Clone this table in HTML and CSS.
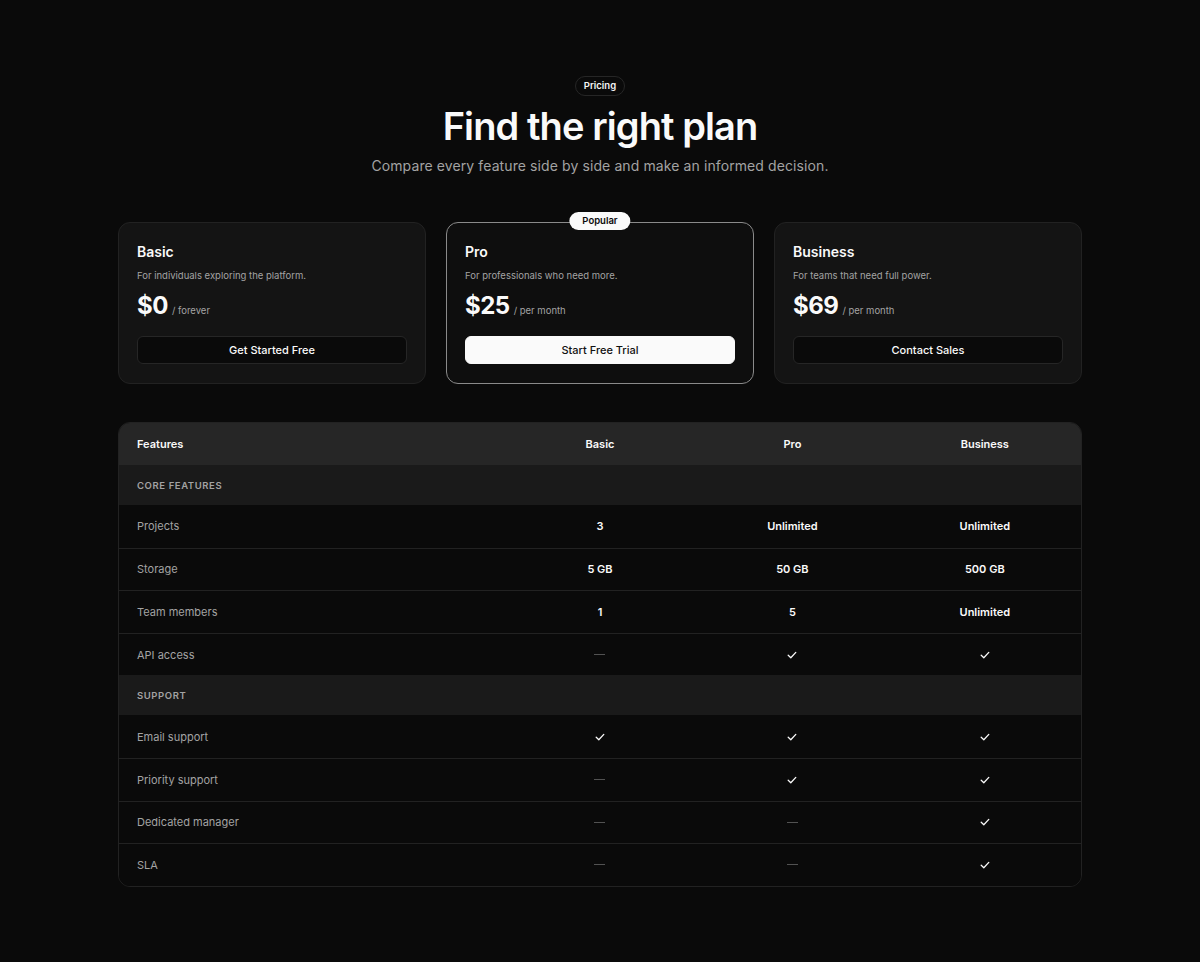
FILE: index.html
```html
<!DOCTYPE html>
<html lang="en">
<head>
<meta charset="utf-8">
<title>Pricing</title>
<link rel="stylesheet" href="styles.css">
</head>
<body>
<main class="page">
  <header class="hero">
    <span class="pill">Pricing</span>
    <h1 class="title">Find the right plan</h1>
    <p class="subtitle">Compare every feature side by side and make an informed decision.</p>
  </header>

  <section class="plans">
    <div class="plan">
      <h2 class="plan-name">Basic</h2>
      <p class="plan-desc">For individuals exploring the platform.</p>
      <div class="plan-price"><span class="amount">$0</span><span class="period">/ forever</span></div>
      <button class="btn">Get Started Free</button>
    </div>
    <div class="plan plan-featured">
      <span class="badge">Popular</span>
      <h2 class="plan-name">Pro</h2>
      <p class="plan-desc">For professionals who need more.</p>
      <div class="plan-price"><span class="amount">$25</span><span class="period">/ per month</span></div>
      <button class="btn btn-primary">Start Free Trial</button>
    </div>
    <div class="plan">
      <h2 class="plan-name">Business</h2>
      <p class="plan-desc">For teams that need full power.</p>
      <div class="plan-price"><span class="amount">$69</span><span class="period">/ per month</span></div>
      <button class="btn">Contact Sales</button>
    </div>
  </section>

  <section class="compare">
    <div class="row row-head">
      <div class="cell label">Features</div>
      <div class="cell">Basic</div>
      <div class="cell">Pro</div>
      <div class="cell">Business</div>
    </div>
    <div class="row row-cat"><div class="cell label">CORE FEATURES</div></div>
    <div class="row">
      <div class="cell label">Projects</div>
      <div class="cell val">3</div>
      <div class="cell val">Unlimited</div>
      <div class="cell val">Unlimited</div>
    </div>
    <div class="row">
      <div class="cell label">Storage</div>
      <div class="cell val">5 GB</div>
      <div class="cell val">50 GB</div>
      <div class="cell val">500 GB</div>
    </div>
    <div class="row">
      <div class="cell label">Team members</div>
      <div class="cell val">1</div>
      <div class="cell val">5</div>
      <div class="cell val">Unlimited</div>
    </div>
    <div class="row">
      <div class="cell label">API access</div>
      <div class="cell"><span class="dash"></span></div>
      <div class="cell"><svg class="check" viewBox="0 0 12 12"><path d="M2.2 6.3 L4.8 8.8 L9.8 3.4"/></svg></div>
      <div class="cell"><svg class="check" viewBox="0 0 12 12"><path d="M2.2 6.3 L4.8 8.8 L9.8 3.4"/></svg></div>
    </div>
    <div class="row row-cat"><div class="cell label">SUPPORT</div></div>
    <div class="row">
      <div class="cell label">Email support</div>
      <div class="cell"><svg class="check" viewBox="0 0 12 12"><path d="M2.2 6.3 L4.8 8.8 L9.8 3.4"/></svg></div>
      <div class="cell"><svg class="check" viewBox="0 0 12 12"><path d="M2.2 6.3 L4.8 8.8 L9.8 3.4"/></svg></div>
      <div class="cell"><svg class="check" viewBox="0 0 12 12"><path d="M2.2 6.3 L4.8 8.8 L9.8 3.4"/></svg></div>
    </div>
    <div class="row">
      <div class="cell label">Priority support</div>
      <div class="cell"><span class="dash"></span></div>
      <div class="cell"><svg class="check" viewBox="0 0 12 12"><path d="M2.2 6.3 L4.8 8.8 L9.8 3.4"/></svg></div>
      <div class="cell"><svg class="check" viewBox="0 0 12 12"><path d="M2.2 6.3 L4.8 8.8 L9.8 3.4"/></svg></div>
    </div>
    <div class="row">
      <div class="cell label">Dedicated manager</div>
      <div class="cell"><span class="dash"></span></div>
      <div class="cell"><span class="dash"></span></div>
      <div class="cell"><svg class="check" viewBox="0 0 12 12"><path d="M2.2 6.3 L4.8 8.8 L9.8 3.4"/></svg></div>
    </div>
    <div class="row">
      <div class="cell label">SLA</div>
      <div class="cell"><span class="dash"></span></div>
      <div class="cell"><span class="dash"></span></div>
      <div class="cell"><svg class="check" viewBox="0 0 12 12"><path d="M2.2 6.3 L4.8 8.8 L9.8 3.4"/></svg></div>
    </div>
  </section>
</main>
</body>
</html>
```

FILE: styles.css
```css
* { box-sizing: border-box; }
html, body {
  margin: 0;
  background: #0a0a0a;
  color: #fafafa;
  font-family: Inter, "Noto Sans", "Liberation Sans", sans-serif;
}
.page {
  width: 964px;
  margin: 0 auto;
  padding: 76px 0 76px;
}
.hero {
  display: flex;
  flex-direction: column;
  align-items: center;
}
.pill {
  display: inline-block;
  font-size: 9.5px;
  font-weight: 600;
  line-height: 12px;
  padding: 3px 8px;
  border: 1px solid #262626;
  border-radius: 999px;
  color: #f5f5f5;
}
.title {
  margin: 7px 0 0;
  font-size: 38px;
  line-height: 46px;
  font-weight: 600;
  letter-spacing: -0.9px;
}
.subtitle {
  margin: 7px 0 0;
  font-size: 14px;
  line-height: 20px;
  color: #a3a3a3;
  letter-spacing: 0.1px;
}
.plans {
  display: grid;
  grid-template-columns: repeat(3, 1fr);
  gap: 20px;
  margin-top: 46px;
}
.plan {
  position: relative;
  background: #141414;
  border: 1px solid #222;
  border-radius: 12px;
  padding: 19px 18px 19px;
  display: flex;
  flex-direction: column;
}
.plan-featured {
  background: #0e0e0e;
  border-color: #8a8a8a;
}
.badge {
  position: absolute;
  top: -11px;
  left: 50%;
  transform: translateX(-50%);
  background: #fafafa;
  color: #0a0a0a;
  font-size: 9.5px;
  font-weight: 600;
  line-height: 12px;
  padding: 3px 13px;
  border-radius: 999px;
}
.plan-name {
  margin: 0;
  font-size: 14px;
  line-height: 20px;
  font-weight: 600;
}
.plan-desc {
  margin: 7px 0 0;
  font-size: 9.5px;
  line-height: 14px;
  color: #a3a3a3;
}
.plan-price {
  display: flex;
  align-items: baseline;
  gap: 4px;
  margin-top: 7px;
}
.amount {
  font-size: 24px;
  line-height: 32px;
  font-weight: 700;
  letter-spacing: -0.5px;
}
.period {
  font-size: 9.5px;
  color: #a3a3a3;
}
.btn {
  margin-top: 14px;
  height: 28px;
  width: 100%;
  background: #0a0a0a;
  color: #fafafa;
  border: 1px solid #262626;
  border-radius: 6px;
  font-family: inherit;
  font-size: 11px;
  font-weight: 500;
}
.btn-primary {
  background: #fafafa;
  color: #111;
  border-color: #fafafa;
}
.compare {
  margin-top: 38px;
  border: 1px solid #222;
  border-radius: 12px;
  overflow: hidden;
}
.row {
  display: grid;
  grid-template-columns: 2fr 1fr 1fr 1fr;
  align-items: center;
  height: 42.6px;
  border-top: 1px solid #222;
  background: #0a0a0a;
}
.row:first-child { border-top: none; }
.cell {
  text-align: center;
  font-size: 11px;
  font-weight: 600;
  display: flex;
  justify-content: center;
  align-items: center;
}
.cell.label {
  justify-content: flex-start;
  padding-left: 18px;
  font-weight: 400;
  color: #a3a3a3;
}
.row-head {
  background: #262626;
  height: 42px;
}
.row-head .cell { color: #fafafa; font-weight: 600; }
.row-head .cell.label { color: #fafafa; font-weight: 600; }
.row-cat {
  background: #1a1a1a;
  height: 40px;
  border-top: none;
}
.row-cat .cell.label {
  font-size: 9.5px;
  font-weight: 600;
  letter-spacing: 0.6px;
  color: #a3a3a3;
}
.row-cat + .row { border-top: none; }
.dash {
  display: block;
  width: 11px;
  height: 1px;
  background: #525252;
}
.check {
  width: 12px;
  height: 12px;
  fill: none;
  stroke: #fafafa;
  stroke-width: 1.3;
  stroke-linecap: round;
  stroke-linejoin: round;
}
```
